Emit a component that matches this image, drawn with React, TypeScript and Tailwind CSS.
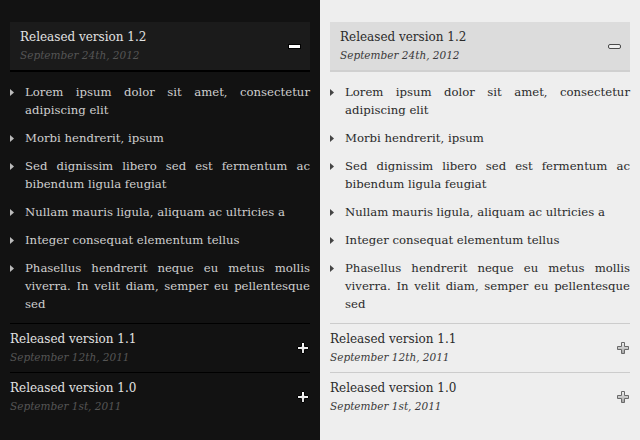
import React from "react";

type Theme = "dark" | "light";

const items = [
  "Lorem ipsum dolor sit amet, consectetur adipiscing elit",
  "Morbi hendrerit, ipsum",
  "Sed dignissim libero sed est fermentum ac bibendum ligula feugiat",
  "Nullam mauris ligula, aliquam ac ultricies a",
  "Integer consequat elementum tellus",
  "Phasellus hendrerit neque eu metus mollis viverra. In velit diam, semper eu pellentesque sed",
];

const releases = [
  { title: "Released version 1.1", date: "September 12th, 2011" },
  { title: "Released version 1.0", date: "September 1st, 2011" },
];

function MinusIcon({ theme }: { theme: Theme }) {
  return (
    <svg width="13" height="5" viewBox="0 0 13 5">
      <rect
        x="0.5"
        y="0.5"
        width="12"
        height="4"
        rx={theme === "light" ? 1.5 : 0}
        fill={theme === "dark" ? "#ffffff" : "#eeeeee"}
        stroke={theme === "dark" ? "#000000" : "#4a4a4a"}
      />
    </svg>
  );
}

function PlusIcon({ theme }: { theme: Theme }) {
  const id = "pg-" + theme;
  return (
    <svg width="12" height="12" viewBox="0 0 12 12">
      <defs>
        <linearGradient id={id} x1="0" y1="0" x2="0" y2="1">
          <stop offset="0" stopColor={theme === "dark" ? "#ffffff" : "#f2f2f2"} />
          <stop offset="1" stopColor={theme === "dark" ? "#d8d8d8" : "#a0a0a0"} />
        </linearGradient>
      </defs>
      <polygon
        points="4.5,0.5 7.5,0.5 7.5,4.5 11.5,4.5 11.5,7.5 7.5,7.5 7.5,11.5 4.5,11.5 4.5,7.5 0.5,7.5 0.5,4.5 4.5,4.5"
        fill={`url(#${id})`}
        stroke={theme === "dark" ? "#000000" : "#6a6a6a"}
      />
    </svg>
  );
}

function Bullet({ theme }: { theme: Theme }) {
  return (
    <svg width="4" height="7" viewBox="0 0 4 7" className="mt-[6px] shrink-0">
      <polygon points="0,0 4,3.5 0,7" fill={theme === "dark" ? "#bbbbbb" : "#444444"} />
    </svg>
  );
}

function Panel({ theme }: { theme: Theme }) {
  const dark = theme === "dark";
  return (
    <div
      className={`w-[320px] h-[440px] px-[10px] pt-[22px] ${
        dark ? "bg-[#121212]" : "bg-[#eeeeee]"
      }`}
      style={{ fontFamily: '"DejaVu Serif", serif' }}
    >
      {/* open release */}
      <div
        className={`flex items-center justify-between pl-[10px] pr-[9px] py-[6px] border-b-2 ${
          dark ? "bg-[#1b1b1b] border-black" : "bg-[#dcdcdc] border-[#d0d0d0]"
        }`}
      >
        <div>
          <div className={`text-[12px] leading-[18px] ${dark ? "text-[#e2e2e2]" : "text-[#2a2a2a]"}`}>
            Released version 1.2
          </div>
          <div className={`text-[10.5px] leading-[18px] italic ${dark ? "text-[#555555]" : "text-[#3a3a3a]"}`}>
            September 24th, 2012
          </div>
        </div>
        <MinusIcon theme={theme} />
      </div>

      <ul className="mt-[11px] mb-[10px] flex flex-col gap-[10px]">
        {items.map((t) => (
          <li key={t} className="flex gap-[11px]">
            <Bullet theme={theme} />
            <span
              className={`text-[11.7px] leading-[18px] text-justify ${
                dark ? "text-[#cfcfcf]" : "text-[#2a2a2a]"
              }`}
            >
              {t}
            </span>
          </li>
        ))}
      </ul>

      {releases.map((r) => (
        <div
          key={r.title}
          className={`flex items-center justify-between py-[6px] pr-[1px] border-t ${
            dark ? "border-black" : "border-[#cccccc]"
          }`}
        >
          <div>
            <div className={`text-[12px] leading-[18px] ${dark ? "text-[#e2e2e2]" : "text-[#2a2a2a]"}`}>
              {r.title}
            </div>
            <div className={`text-[10.5px] leading-[18px] italic ${dark ? "text-[#555555]" : "text-[#3a3a3a]"}`}>
              {r.date}
            </div>
          </div>
          <PlusIcon theme={theme} />
        </div>
      ))}
    </div>
  );
}

export default function App() {
  return (
    <div className="flex w-[640px] h-[440px] overflow-hidden">
      <Panel theme="dark" />
      <Panel theme="light" />
    </div>
  );
}
